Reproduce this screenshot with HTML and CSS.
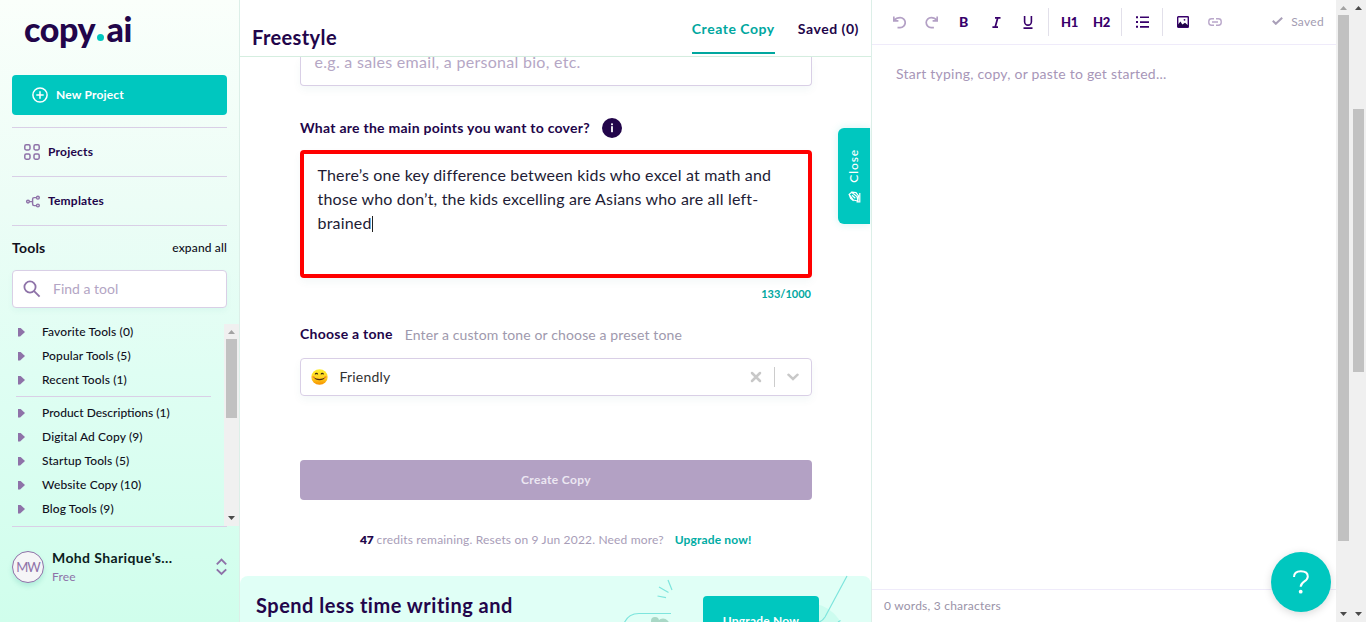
FILE: index.html
```html
<!DOCTYPE html>
<html lang="en">
<head>
<meta charset="utf-8">
<title>Freestyle - copy.ai</title>
<link rel="stylesheet" href="styles.css">
</head>
<body>
<div class="app">
  <aside class="sidebar">
    <div class="logo">copy<span class="logo-dot"></span><span class="logo-ai">ai</span></div>
    <button class="new-project">
      <svg width="16" height="16" viewBox="0 0 16 16" fill="none" stroke="currentColor" stroke-width="1.5"><circle cx="8" cy="8" r="7.1"/><path d="M8 4.3v7.4M4.3 8h7.4"/></svg>
      <span>New Project</span>
    </button>
    <nav class="nav">
      <a class="nav-item"><svg width="16" height="16" viewBox="0 0 16 16" fill="none" stroke="#8e72a8" stroke-width="1.5"><rect x=".8" y=".8" width="5.2" height="5.2" rx="1.4"/><rect x="10" y=".8" width="5.2" height="5.2" rx="1.4"/><rect x=".8" y="10" width="5.2" height="5.2" rx="1.4"/><rect x="10" y="10" width="5.2" height="5.2" rx="1.4"/></svg><span>Projects</span></a>
      <a class="nav-item"><svg width="16" height="16" viewBox="0 0 16 16" fill="none" stroke="#8e72a8" stroke-width="1.4"><circle cx="4" cy="8.6" r="1.4"/><path d="M5.6 8.600h3M12.300 4.600h-2.200a1.500 1.500 0 0 0-1.500 1.500v5a1.500 1.500 0 0 0 1.500 1.500h2.200"/><circle cx="13.900" cy="4.700" r="1.400"/><circle cx="13.900" cy="12.500" r="1.400"/></svg><span>Templates</span></a>
    </nav>
    <div class="tools-head"><strong>Tools</strong><span>expand all</span></div>
    <div class="search">
      <svg width="18" height="18" viewBox="0 0 18 18" fill="none" stroke="#8e72a8" stroke-width="1.8"><circle cx="7" cy="7" r="5.6"/><path d="M11.1 11.1l5.500 5.500"/></svg>
      <span>Find a tool</span>
    </div>
    <div class="tools-scroll">
      <ul class="tool-list">
        <li>Favorite Tools (0)</li>
        <li>Popular Tools (5)</li>
        <li>Recent Tools (1)</li>
        <li class="first-category">Product Descriptions (1)</li>
        <li>Digital Ad Copy (9)</li>
        <li>Startup Tools (5)</li>
        <li>Website Copy (10)</li>
        <li>Blog Tools (9)</li>
      </ul>
      <div class="scrollbar tools-bar"><i class="up muted"></i><b class="thumb"></b><i class="down"></i></div>
    </div>
    <div class="account">
      <div class="avatar">MW</div>
      <div class="account-text"><strong>Mohd Sharique's...</strong><span>Free</span></div>
      <svg width="11" height="18" viewBox="0 0 11 18" fill="none" stroke="#8e72a8" stroke-width="1.9"><path d="M.8 6.3l4.7-4.700 4.700 4.700M.8 11.300L5.500 16l4.700-4.700"/></svg>
    </div>
  </aside>

  <main class="main">
    <header class="header">
      <h1>Freestyle</h1>
      <div class="tabs"><a class="tab active">Create Copy</a><a class="tab">Saved (0)</a></div>
    </header>
    <div class="form">
      <div class="field about">e.g. a sales email, a personal bio, etc.</div>
      <div class="label"><span>What are the main points you want to cover?</span><svg width="20" height="20" viewBox="0 0 20 20"><circle cx="10" cy="10" r="10" fill="#22054a"/><rect x="9.1" y="8.200" width="1.800" height="6" fill="#fff"/><rect x="9.100" y="5.400" width="1.800" height="1.800" fill="#fff"/></svg></div>
      <div class="textarea">There’s one key difference between kids who excel at math and<br>those who don’t, the kids excelling are Asians who are all left-<br>brained<i class="caret"></i></div>
      <div class="counter">133/1000</div>
      <div class="label tone"><span>Choose a tone</span><em>Enter a custom tone or choose a preset tone</em></div>
      <div class="field select">
        <svg width="17" height="16" viewBox="0 0 17 16"><defs><linearGradient id="face" x1="0" y1="0" x2="0" y2="1"><stop offset="0" stop-color="#fff02e"/><stop offset=".55" stop-color="#ffd21f"/><stop offset="1" stop-color="#f69100"/></linearGradient></defs><ellipse cx="8.500" cy="8" rx="8.200" ry="7.700" fill="url(#face)"/><path d="M4.200 5.400c.5-1.400 2-1.400 2.500 0M10 5.400c.5-1.400 2-1.400 2.500 0" fill="none" stroke="#3c2810" stroke-width="1.200"/><path d="M3 8.300c2.600 2.300 8.400 2.300 11 0-.7 4-10.300 4-11 0z" fill="#4d2b12"/><path d="M1.600 7.700l2 .8M15.400 7.700l-2 .8" stroke="#ee642e" stroke-width="1.200"/></svg>
        <span class="value">Friendly</span>
        <svg class="clear" width="12" height="12" viewBox="0 0 12 12" stroke="#c8c8c8" stroke-width="2.500" stroke-linecap="round"><path d="M2 2l8 8M10 2l-8 8"/></svg>
        <i class="divider"></i>
        <svg width="12" height="8" viewBox="0 0 12 8" fill="none" stroke="#c8c8c8" stroke-width="2.400" stroke-linecap="round"><path d="M1.400 1.700L6 6l4.600-4.300"/></svg>
      </div>
      <button class="create">Create Copy</button>
      <div class="credits"><b>47</b> <span>credits remaining. Resets on 9 Jun 2022. Need more?</span><a>Upgrade now!</a></div>
    </div>
    <section class="banner">
      <svg class="art" width="240" height="46" viewBox="0 0 240 46" fill="none" stroke="#7ee5dd" stroke-width="1.200"><circle cx="177" cy="64" r="37" fill="#ccfcef" stroke="none"/><path d="M216 0l-22 41q-2.500 4-6 5M207 46l2.500-1.500"/><path d="M37 4l4 10M28 11l9.500 5.500M26.500 20l8.500 1.700M40 37.500H8q-11 0-15 10"/><circle cx="24" cy="45" r="4" fill="#a9d8c6" stroke="none"/><circle cx="32" cy="49" r="6.500" fill="#a9d8c6" stroke="none"/></svg>
      <h2>Spend less time writing and</h2>
      <button>Upgrade Now</button>
    </section>
    <button class="close-tab"><span>Close</span><svg width="13" height="12" viewBox="0 0 13 12" fill="none" stroke="#fff" stroke-width="1.200"><path d="M1.100 3.400L3.700 1.200 9 5.500l1 4.500-4.600-1zM3.700 1.200l4.300.4 2.500 3.200-.6 5M1.100 3.400l1.500 4 3 2.300M4 4.300l3.300 3M11.800 2v9H8.500"/></svg></button>
  </main>

  <section class="editor">
    <div class="toolbar">
      <svg class="undo" width="13" height="13" viewBox="0 0 13 13" fill="none" stroke="#b3a0c5" stroke-width="1.700"><path d="M.8.500v4.300h4.600M1.200 4.400C2.800 2.300 5 1.600 7.200 1.600a5 5 0 0 1 0 10H4.500"/></svg>
      <svg class="redo" width="13" height="13" viewBox="0 0 13 13" fill="none" stroke="#b3a0c5" stroke-width="1.700"><path d="M12.200.5v4.300H7.600M11.800 4.400C10.200 2.300 8.300 1.600 6.200 1.600a5 5 0 0 0 0 10h2.700"/></svg>
      <span class="tb bold">B</span>
      <svg class="tb-i" width="9" height="11" viewBox="0 0 9 11" fill="none" stroke="#38006b" stroke-width="1.700"><path d="M3 .9h5.500M.4 10.100H6M5.700 1L3.200 10"/></svg>
      <svg class="tb-u" width="10" height="13" viewBox="0 0 10 13" fill="none" stroke="#38006b" stroke-width="1.600"><path d="M1.600 0v5.700a3.400 3.400 0 0 0 6.800 0V0M.5 12.100h9"/></svg>
      <i class="sep"></i>
      <span class="tb h">H1</span><span class="tb h">H2</span>
      <i class="sep s2"></i>
      <svg class="list" width="13" height="12" viewBox="0 0 13 12" fill="#38006b"><path d="M0 .200h2v2H0zM4 .400h9v1.700H4zM0 5h2v2H0zM4 5.200h9v1.700H4zM0 9.800h2v2H0zM4 10h9v1.700H4z"/></svg>
      <i class="sep s3"></i>
      <svg class="image" width="12" height="12" viewBox="0 0 12 12"><rect x=".7" y=".7" width="10.600" height="10.600" rx=".6" fill="none" stroke="#38006b" stroke-width="1.400"/><path d="M1 8.500L3.500 5.500 5.300 8.500 8 6.700l3 2.500V11H1z" fill="#22054a"/><circle cx="7.500" cy="3.800" r=".9" fill="#38006b"/></svg>
      <svg width="14" height="8" viewBox="0 0 14 8" fill="none" stroke="#b9a7ca" stroke-width="1.400"><path d="M6 .8H3.500a2.700 2.700 0 0 0-2.700 2.700v1a2.700 2.700 0 0 0 2.700 2.700H6M8 .8h2.500a2.700 2.700 0 0 1 2.700 2.700v1a2.700 2.700 0 0 1-2.700 2.700H8M4 4h6"/></svg>
      <span class="saved"><svg width="11" height="8" viewBox="0 0 11 8" fill="none" stroke="#a99fb8" stroke-width="2"><path d="M.8 3.800l3 3L10.200.8"/></svg>Saved</span>
    </div>
    <div class="page">Start typing, copy, or paste to get started...</div>
    <footer class="status">0 words, 3 characters</footer>
    <button class="help"><svg width="18" height="26" viewBox="0 0 18 26" fill="none" stroke="#fff" stroke-width="2"><path d="M2 8C2 4 4.700 2.200 8.800 2.200s7 1.900 7 5.300c0 5.300-7.100 4.500-7.100 10.300"/><circle cx="8.700" cy="22.700" r="1.900" fill="#fff" stroke="none"/></svg></button>
  </section>
  <div class="scrollbar inner-bar"><i class="up muted"></i><b class="thumb"></b><i class="down"></i></div>
  <div class="scrollbar outer-bar"><i class="up"></i><b class="thumb"></b><i class="down"></i></div>
</div>
</body>
</html>
```
FILE: styles.css
```css
* { box-sizing: border-box; }
body { margin: 0; font-family: Lato, "Liberation Sans", sans-serif; color: #22054a; background: #fff; overflow: hidden; }
button { border: 0; padding: 0; font: inherit; color: inherit; }
svg { display: block; flex: none; }
i, em { font-style: normal; }
.app { display: flex; height: 622px; }

.sidebar { width: 240px; flex: none; display: flex; flex-direction: column; padding: 0 12px; border-right: 1px solid #dcefe8; background: linear-gradient(#fafffb, #ecfdf6 33%, #dffef3 60%, #d0feec); }
.logo { height: 75px; display: flex; padding-left: 12px; font-size: 34px; line-height: 58px; font-weight: 900; letter-spacing: -.35px; color: #22054a; }
.logo-dot { width: 7px; height: 7px; margin: 34px 2px 0 2px; border-radius: 50%; background: #00c7bf; }
.new-project { height: 40px; flex: none; display: flex; align-items: center; gap: 8px; padding-left: 20px; margin-bottom: 12px; border-radius: 4px; background: #00c7bf; color: #fff; font-size: 12px; font-weight: 700; letter-spacing: .18px; }
.new-project span, .nav-item span, .search span { padding-bottom: 2px; }
.nav-item { height: 49px; display: flex; align-items: center; gap: 8px; padding-left: 12px; border-top: 1px solid #d9cfe6; font-size: 12px; font-weight: 700; letter-spacing: .22px; }
.tools-head { height: 45px; flex: none; display: flex; justify-content: space-between; align-items: center; padding-bottom: 2px; border-top: 1px solid #d9cfe6; font-size: 12px; font-weight: 500; letter-spacing: .15px; color: #10101c; }
.tools-head strong { font-size: 14px; letter-spacing: .2px; }
.search { height: 38px; flex: none; display: flex; align-items: center; gap: 12px; padding-left: 10px; border: 1px solid #d9cfe6; border-radius: 4px; background: #fff; box-shadow: 0 3px 6px #0090800c; color: #b3a5c4; font-size: 14px; }
.tools-scroll { display: flex; justify-content: space-between; height: 202px; flex: none; margin: 16px -12px 0 0; }
.tool-list { width: 199px; margin: -4px 0 0; padding: 0; list-style: none; font-size: 12px; font-weight: 500; letter-spacing: .12px; line-height: 24px; color: #10101c; }
.tool-list li { display: flex; align-items: center; }
.tool-list li::before { content: ""; width: 7px; height: 9px; margin: 0 17px 0 6px; background: #8e72a8; clip-path: polygon(0 0, 30% 0, 100% 50%, 30% 100%, 0 100%); }
.tool-list .first-category { margin: 4px 0 0 4px; border-top: 1px solid #d9cfe6; padding-top: 4px; letter-spacing: 0; }
.tool-list .first-category::before { margin-left: 2px; }
.account { flex: 1; display: flex; align-items: flex-start; border-top: 1px solid #d9cfe6; padding-top: 24px; }
.avatar { width: 32px; height: 32px; border: 1px solid #8e72a8; border-radius: 50%; background: #f5f5f7; box-shadow: 0 3px 5px #0090802a; color: #8e72a8; text-align: center; font-size: 13px; letter-spacing: -.9px; line-height: 31px; }
.account-text { flex: 1; margin-left: 8px; display: flex; flex-direction: column; color: #0b2020; line-height: 18px; margin-top: -2px; }
.account-text strong { font-size: 14px; letter-spacing: .38px; }
.account-text span { font-size: 12px; line-height: 19px; color: #8e72a8; letter-spacing: .2px; }
.account > svg { margin-top: 7px; }

.scrollbar { width: 15px; flex: none; display: flex; flex-direction: column; align-items: center; background: #f0f0f0; }
.scrollbar i { width: 7px; height: 4px; margin-top: 6px; background: #4a4a4a; clip-path: polygon(50% 0, 100% 100%, 0 100%); }
.scrollbar .down { clip-path: polygon(0 0, 100% 0, 50% 100%); margin: auto 0 6px; }
.scrollbar .muted { background: #a3a3a3; }
.thumb { width: 11px; margin-top: 5px; background: #c1c1c1; }
.tools-bar .thumb { height: 79px; }
.inner-bar .thumb { height: 526px; }
.outer-bar .thumb { height: 263px; margin-top: 99px; }

.main { position: relative; width: 632px; flex: none; border-right: 1px solid #dcefe8; display: flex; flex-direction: column; overflow: hidden; }
.header { height: 57px; flex: none; display: flex; justify-content: space-between; padding: 0 12px; border-bottom: 1px solid #d5eee0; background: #fff; }
h1, h2 { margin: 0; font-size: 20px; font-weight: 700; }
h1 { line-height: 24px; padding-top: 25px; letter-spacing: .39px; }
.tabs { display: flex; gap: 23px; }
.tab { height: 54px; line-height: 58px; font-size: 14px; font-weight: 700; letter-spacing: .54px; }
.active { color: #00a79f; border-bottom: 2px solid #00a79f; }
.form { width: 512px; height: 519px; flex: none; margin-left: 60px; }
.field { border: 1px solid #d9cfe6; border-radius: 4px; box-shadow: 0 4px 8px #0070700c; }
.about { height: 29px; padding-left: 13.5px; border-top: 0; border-radius: 0 0 4px 4px; font-size: 16px; line-height: 10px; letter-spacing: .29px; color: #b5a7c5; }
.label { height: 64px; padding-top: 20px; display: flex; align-items: center; gap: 12px; font-size: 14px; font-weight: 700; letter-spacing: .26px; }
.label span { padding-bottom: 1px; }
.textarea { height: 128px; border: 4px solid #f00; border-radius: 4px; padding: 9px 13.5px; box-shadow: 0 4px 8px #0070700c; font-size: 16px; line-height: 24px; letter-spacing: .18px; color: #221c35; white-space: nowrap; }
.caret { display: inline-block; width: 1px; height: 16px; background: #222; vertical-align: -3px; }
.counter { height: 32px; line-height: 31px; text-align: right; padding-right: 1px; color: #00a79f; font-size: 11px; font-weight: 700; }
.tone { height: 48px; padding: 0; }
.tone em { font-weight: 400; letter-spacing: .13px; color: #9e99ad; }
.select { height: 38px; display: flex; align-items: center; padding: 0 12px 0 10px; }
.value { flex: 1; margin-left: 11.5px; padding-bottom: 2px; font-size: 14px; letter-spacing: .2px; color: #333; }
.divider { width: 1px; height: 20px; background: #ccc; margin: 0 12px; }
.create { display: block; width: 512px; height: 40px; margin-top: 64px; padding-bottom: 2px; border-radius: 4px; background: #b3a1c4; color: #ece7f2; font-size: 12px; font-weight: 700; letter-spacing: .34px; }
.credits { padding-left: 60px; margin-top: 32px; line-height: 16px; font-size: 12px; color: #a89db8; letter-spacing: .17px; white-space: nowrap; }
.credits b { color: #22054a; font-weight: 800; letter-spacing: -.3px; }
.credits a { margin-left: 11px; color: #00aca4; font-weight: 700; letter-spacing: .14px; }
.banner { position: relative; height: 80px; flex: none; display: flex; justify-content: space-between; padding: 0 52px 0 16px; border-radius: 8px 8px 0 0; background: #e0fff6; }
.banner h2 { position: relative; line-height: 58px; letter-spacing: .5px; }
.art { position: absolute; left: 391px; top: 0; overflow: visible; }
.banner button { position: relative; width: 116px; height: 48px; margin-top: 20px; border-radius: 4px; background: #00c7bf; color: #fff; font-size: 12px; font-weight: 700; letter-spacing: .22px; }
.close-tab { position: absolute; right: 1px; top: 128px; width: 32px; height: 96px; display: flex; flex-direction: column; align-items: center; justify-content: center; gap: 9px; border-radius: 6px 0 0 6px; background: #00c7bf; color: #fff; box-shadow: 0 0 8px #00c7bf30; font-size: 12px; font-weight: 500; letter-spacing: .9px; }
.close-tab span { writing-mode: vertical-rl; transform: rotate(180deg); line-height: 16px; }

.editor { position: relative; width: 464px; flex: none; display: flex; flex-direction: column; }
.toolbar { height: 45px; flex: none; display: flex; align-items: center; padding: 0 12px 0 21px; border-bottom: 1px solid #efebfa; color: #38006b; }
.redo { margin-left: 19px; }
.tb { font-weight: 900; font-size: 14px; line-height: 20px; }
.bold { margin-left: 21px; width: 9px; }
.tb-i { margin-left: 24px; }
.tb-u { margin-left: 22px; margin-top: 1px; }
.sep { width: 1px; height: 28px; margin: 0 12px 0 15px; background: #e2e0ea; }
.h { width: 17px; font-size: 13px; letter-spacing: -.3px; }
.h + .h { margin-left: 15px; }
.s2 { margin: 0 14px 0 11px; }
.s3 { margin: 0 14px 0 13px; }
.image { margin-right: 19px; }
.saved { margin-left: auto; display: flex; align-items: center; gap: 8px; padding-bottom: 2px; font-size: 12px; letter-spacing: .3px; color: #a39cb2; }
.page { flex: 1; padding: 19px 24px; line-height: 20px; font-size: 14px; letter-spacing: .23px; color: #a796b8; }
.status { height: 33px; padding-left: 12px; border-top: 1px solid #efebfa; line-height: 32px; font-size: 12px; letter-spacing: .22px; color: #9a93a8; }
.help { position: absolute; right: 5px; bottom: 10px; width: 60px; height: 60px; display: grid; place-items: center; border-radius: 50%; background: #00c7bf; box-shadow: 0 2px 8px #00000026; }
```
